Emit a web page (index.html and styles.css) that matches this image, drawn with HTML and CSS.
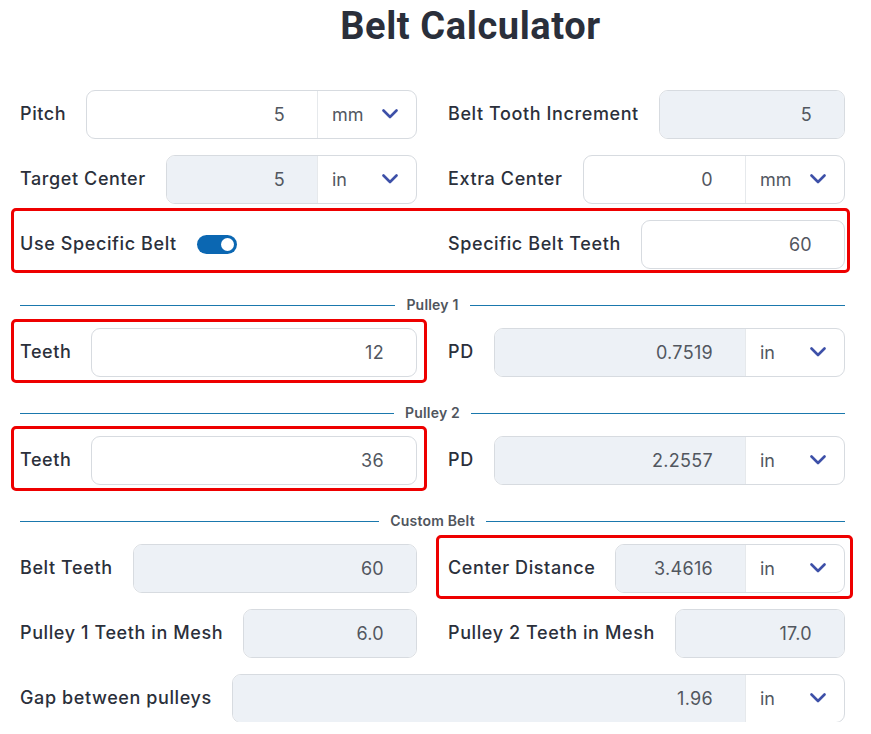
FILE: index.html
```html
<!DOCTYPE html>
<html>
<head>
<meta charset="utf-8">
<link rel="stylesheet" href="styles.css">
</head>
<body>
<div class="page">
  <h1 class="title">Belt Calculator</h1>

  <div class="rows">
    <div class="row">
      <div class="field">
        <span class="label">Pitch</span>
        <div class="input"><span class="num">5</span><span class="unit">mm<svg class="chev" viewBox="0 0 16 10"><path d="M1.5 1.5 L8 8 L14.5 1.5"/></svg></span></div>
      </div>
      <div class="field">
        <span class="label">Belt Tooth Increment</span>
        <div class="input"><span class="num ro">5</span></div>
      </div>
    </div>
    <div class="row">
      <div class="field">
        <span class="label">Target Center</span>
        <div class="input"><span class="num ro">5</span><span class="unit">in<svg class="chev" viewBox="0 0 16 10"><path d="M1.5 1.5 L8 8 L14.5 1.5"/></svg></span></div>
      </div>
      <div class="field">
        <span class="label">Extra Center</span>
        <div class="input"><span class="num">0</span><span class="unit">mm<svg class="chev" viewBox="0 0 16 10"><path d="M1.5 1.5 L8 8 L14.5 1.5"/></svg></span></div>
      </div>
    </div>
    <div class="row hl hl-belt">
      <div class="field">
        <span class="label">Use Specific Belt</span>
        <span class="toggle"><span class="knob"></span></span>
      </div>
      <div class="field">
        <span class="label">Specific Belt Teeth</span>
        <div class="input"><span class="num">60</span></div>
      </div>
    </div>
  </div>

  <div class="divider"><span>Pulley 1</span></div>

  <div class="rows">
    <div class="row">
      <div class="field hl hl-teeth1">
        <span class="label">Teeth</span>
        <div class="input"><span class="num">12</span></div>
      </div>
      <div class="field">
        <span class="label">PD</span>
        <div class="input"><span class="num ro">0.7519</span><span class="unit">in<svg class="chev" viewBox="0 0 16 10"><path d="M1.5 1.5 L8 8 L14.5 1.5"/></svg></span></div>
      </div>
    </div>
  </div>

  <div class="divider"><span>Pulley 2</span></div>

  <div class="rows">
    <div class="row">
      <div class="field hl hl-teeth2">
        <span class="label">Teeth</span>
        <div class="input"><span class="num">36</span></div>
      </div>
      <div class="field">
        <span class="label">PD</span>
        <div class="input"><span class="num ro">2.2557</span><span class="unit">in<svg class="chev" viewBox="0 0 16 10"><path d="M1.5 1.5 L8 8 L14.5 1.5"/></svg></span></div>
      </div>
    </div>
  </div>

  <div class="divider"><span>Custom Belt</span></div>

  <div class="rows">
    <div class="row">
      <div class="field">
        <span class="label">Belt Teeth</span>
        <div class="input"><span class="num ro">60</span></div>
      </div>
      <div class="field hl hl-center">
        <span class="label">Center Distance</span>
        <div class="input"><span class="num ro">3.4616</span><span class="unit">in<svg class="chev" viewBox="0 0 16 10"><path d="M1.5 1.5 L8 8 L14.5 1.5"/></svg></span></div>
      </div>
    </div>
    <div class="row">
      <div class="field">
        <span class="label">Pulley 1 Teeth in Mesh</span>
        <div class="input"><span class="num ro">6.0</span></div>
      </div>
      <div class="field">
        <span class="label">Pulley 2 Teeth in Mesh</span>
        <div class="input"><span class="num ro">17.0</span></div>
      </div>
    </div>
    <div class="row single">
      <div class="field">
        <span class="label">Gap between pulleys</span>
        <div class="input"><span class="num ro">1.96</span><span class="unit">in<svg class="chev" viewBox="0 0 16 10"><path d="M1.5 1.5 L8 8 L14.5 1.5"/></svg></span></div>
      </div>
    </div>
  </div>
</div>
</body>
</html>
```

FILE: styles.css
```css
* { box-sizing: border-box; }

html, body {
  margin: 0;
  background: #ffffff;
}

body {
  font-family: Inter, "Noto Sans", sans-serif;
  color: #2b303b;
}

.page {
  width: 871px;
  padding: 0 26px 0 20px;
}

.title {
  margin: 0;
  height: 50px;
  padding: 3px 0 0 76px;
  text-align: center;
  font-family: Roboto, "Liberation Sans", sans-serif;
  font-weight: 700;
  font-size: 38px;
  line-height: 46px;
  color: #2a2f3b;
  letter-spacing: 0.6px;
}

.rows {
  display: flex;
  flex-direction: column;
  gap: 17px;
}

.title + .rows {
  margin-top: 40px;
}

.row {
  display: grid;
  grid-template-columns: 1fr 1fr;
  column-gap: 31px;
  position: relative;
}

.row.single {
  grid-template-columns: 1fr;
}

.field {
  display: flex;
  align-items: center;
  gap: 20px;
  height: 48px;
  position: relative;
}

.label {
  font-size: 18px;
  font-weight: 450;
  letter-spacing: 0.6px;
  white-space: nowrap;
  color: #2b303b;
  margin-top: -2px;
}

.input {
  flex: 1;
  display: flex;
  height: 49px;
  border: 1px solid #d7dbe0;
  border-radius: 9px;
  overflow: hidden;
  background: #ffffff;
}

.num {
  flex: 1;
  text-align: right;
  padding-right: 32px;
  font-size: 18px;
  line-height: 48px;
  color: #52575f;
  letter-spacing: 0.3px;
}

.num.ro {
  background: #edf1f6;
}

.unit {
  width: 99px;
  flex: none;
  display: flex;
  align-items: center;
  justify-content: space-between;
  padding: 0 18px 0 14px;
  border-left: 1px solid #e6e9ec;
  font-size: 18px;
  color: #52575f;
}

.chev {
  width: 16px;
  height: 10px;
  fill: none;
  stroke: #3d50a8;
  stroke-width: 2.6;
  stroke-linecap: round;
  stroke-linejoin: round;
}

.toggle {
  width: 40px;
  height: 19px;
  border-radius: 10px;
  background: #0b67b2;
  display: flex;
  align-items: center;
  justify-content: flex-end;
  padding-right: 3px;
}

.knob {
  width: 13px;
  height: 13px;
  border-radius: 50%;
  background: #ffffff;
}

.divider {
  display: flex;
  align-items: center;
  gap: 11px;
  height: 14px;
  margin: 30px 0 16px;
}

.divider::before,
.divider::after {
  content: "";
  flex: 1;
  height: 1px;
  background: #1a78ad;
}

.divider span {
  font-size: 14px;
  font-weight: 600;
  color: #50555d;
  line-height: 14px;
  letter-spacing: 0.2px;
}

/* red annotation boxes */
.hl::after {
  content: "";
  position: absolute;
  border: 3px solid #ee0000;
  border-radius: 5px;
  pointer-events: none;
}

.hl-belt::after {
  top: -12px;
  bottom: -5px;
  left: -9px;
  right: -5px;
}

.hl-teeth1::after {
  top: -9px;
  bottom: -7px;
  left: -9px;
  right: -10px;
}

.hl-teeth2::after {
  top: -10px;
  bottom: -7px;
  left: -9px;
  right: -10px;
}

.hl-center::after {
  top: -9px;
  bottom: -7px;
  left: -12px;
  right: -8px;
}
```
